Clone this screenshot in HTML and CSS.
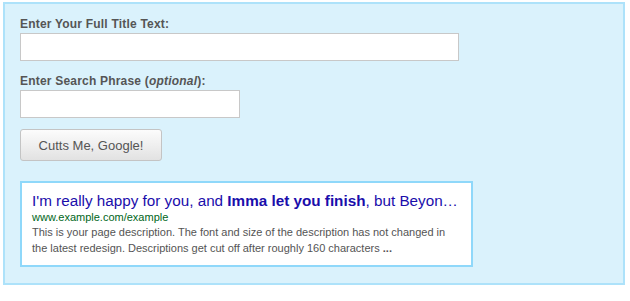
FILE: index.html
```html
<!DOCTYPE html>
<html lang="en">
<head>
<meta charset="UTF-8">
<title>Cutts Me, Google!</title>
<link rel="stylesheet" href="styles.css">
</head>
<body>

<div class="tool-box">
    <label class="field-label" for="title-text">Enter Your Full Title Text:</label>
    <input type="text" id="title-text" class="field-input field-wide">

    <label class="field-label" for="search-phrase">Enter Search Phrase (<em>optional</em>):</label>
    <input type="text" id="search-phrase" class="field-input field-short">

    <button type="button" class="cutts-button">Cutts Me, Google!</button>

    <div class="serp-preview">
        <div class="serp-title">I'm really happy for you, and <b>Imma let you finish</b>, but Beyon…</div>
        <div class="serp-url">www.example.com/example</div>
        <div class="serp-desc">This is your page description. The font and size of the description has not changed in the latest redesign. Descriptions get cut off after roughly 160 characters <b>...</b></div>
    </div>
</div>

</body>
</html>
```

FILE: styles.css
```css
/* 全体 */
body {
    margin: 2px 5px 0 3px;
    font-family: Arial, "Liberation Sans", sans-serif;
    background-color: #fff;
}

/* 外枠 */
.tool-box {
    background-color: #daf2fc;
    border: 2px solid #ade2fa;
    padding: 13px 15px 16px;
    display: flex;
    flex-direction: column;
    align-items: flex-start;
}

/* ラベル */
.field-label {
    font-size: 12px;
    line-height: 14px;
    font-weight: bold;
    color: #555;
    letter-spacing: 0.2px;
    margin-bottom: 2px;
}
.field-label em {
    font-style: italic;
}

/* 入力欄 */
.field-input {
    box-sizing: border-box;
    height: 28px;
    margin: 0 0 13px;
    border: 1px solid #c8c8c8;
    background-color: #fff;
    font-family: Arial, "Liberation Sans", sans-serif;
    font-size: 14px;
    padding: 4px 6px;
}
.field-wide {
    width: 439px;
}
.field-short {
    width: 220px;
    margin-bottom: 11px;
}

/* ボタン */
.cutts-button {
    box-sizing: border-box;
    width: 142px;
    height: 32px;
    padding: 0;
    border: 1px solid #c4c4c4;
    border-radius: 3px;
    background: linear-gradient(#fcfcfc, #e2e2e2);
    font-family: Arial, "Liberation Sans", sans-serif;
    font-size: 13px;
    color: #555;
    margin-bottom: 20px;
}

/* 検索結果プレビュー */
.serp-preview {
    box-sizing: border-box;
    width: 453px;
    background-color: #fff;
    border: 2px solid #8fd8fa;
    padding: 9px 10px 9px;
}
.serp-title {
    font-size: 15.25px;
    line-height: 18px;
    color: #1a0dab;
    white-space: nowrap;
}
.serp-url {
    font-size: 11px;
    line-height: 15px;
    color: #006621;
}
.serp-desc {
    font-size: 11px;
    line-height: 15.5px;
    color: #545454;
}
```
